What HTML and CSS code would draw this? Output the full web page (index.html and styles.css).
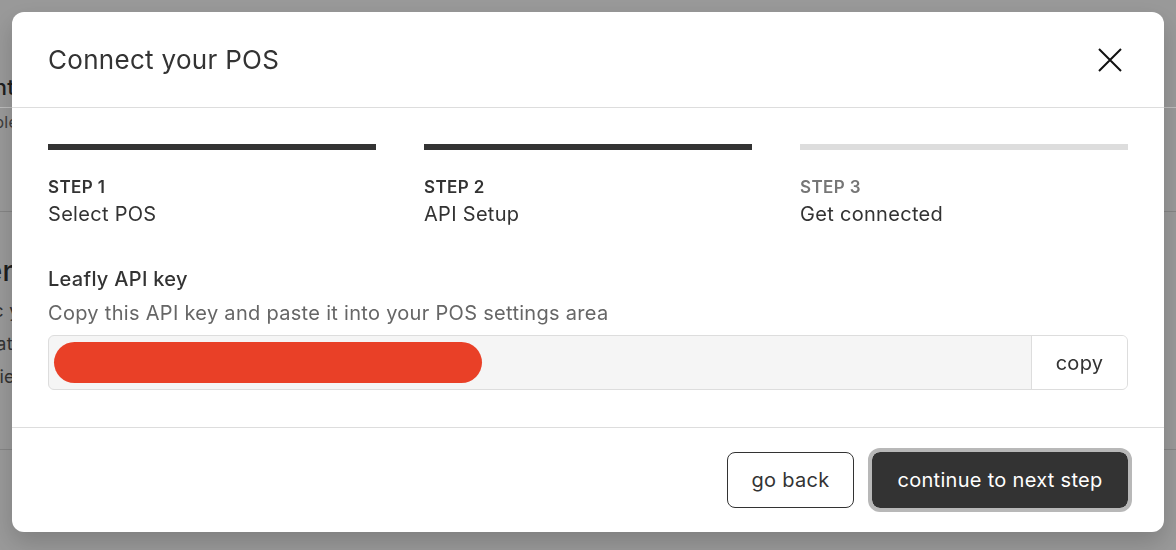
FILE: index.html
```html
<!DOCTYPE html>
<html>
<head>
<title>Connect your POS</title>
<link rel="stylesheet" href="styles.css">
</head>
<body>

<div class="page">
  <div class="pageHead">
    <h2 class="pageTitle">Point of sale connection</h2>
    <p class="pageSub">Sample menu import</p>
  </div>
  <div class="pageSection">
    <h3 class="sectionTitle">Menu integration</h3>
    <p class="sectionText">Sync your inventory</p>
    <p class="sectionText">Update availability</p>
    <p class="sectionText">Preview what shoppers see</p>
  </div>
</div>

<div class="overlay">
  <div class="modal">
    <div class="modalHeader">
      <h1 class="modalTitle">Connect your POS</h1>
      <button class="closeButton" aria-label="close">
        <svg width="24" height="24" viewBox="0 0 24 24">
          <path d="M1 1 L23 23 M23 1 L1 23" stroke="#111" stroke-width="2" fill="none"/>
        </svg>
      </button>
    </div>

    <div class="modalBody">
      <div class="steps">
        <div class="step done">
          <div class="stepBar"></div>
          <div class="stepNum">STEP 1</div>
          <div class="stepName">Select POS</div>
        </div>
        <div class="step done">
          <div class="stepBar"></div>
          <div class="stepNum">STEP 2</div>
          <div class="stepName">API Setup</div>
        </div>
        <div class="step">
          <div class="stepBar"></div>
          <div class="stepNum">STEP 3</div>
          <div class="stepName">Get connected</div>
        </div>
      </div>

      <div class="keyLabel">Leafly API key</div>
      <div class="keyHelp">Copy this API key and paste it into your POS settings area</div>
      <div class="keyField">
        <div class="keyValue"><span class="redacted"></span></div>
        <button class="copyButton">copy</button>
      </div>
    </div>

    <div class="modalFooter">
      <button class="backButton">go back</button>
      <button class="nextButton">continue to next step</button>
    </div>
  </div>
</div>

</body>
</html>
```

FILE: styles.css
```css
html, body {
  margin: 0;
  height: 100%;
  overflow: hidden;
}

body {
  font-family: Inter, "Noto Sans", sans-serif;
  color: #333;
  background: #fff;
  letter-spacing: 0.3px;
}

/* page behind the dialog */
.page {
  margin-left: -40px;
}

.pageHead {
  height: 212px;
  padding-top: 74px;
  box-sizing: border-box;
  border-bottom: 1px solid #ddd;
}

.pageTitle {
  margin: 0;
  font-size: 22px;
  font-weight: 500;
}

.pageSub {
  margin: 12px 0 0 0;
  font-size: 16px;
  color: #666;
}

.pageSection {
  height: 238px;
  border-bottom: 1px solid #ddd;
  padding-top: 42px;
  box-sizing: border-box;
}

.sectionTitle {
  margin: 0 0 6px 0;
  font-size: 28px;
  font-weight: 500;
}

.sectionText {
  margin: 0;
  font-size: 18px;
  line-height: 33px;
  color: #555;
}

.overlay {
  position: fixed;
  inset: 0;
  background: rgba(0, 0, 0, 0.4);
  padding: 12px;
  box-sizing: border-box;
}

.overlay::before {
  content: "";
  position: absolute;
  left: 0;
  right: 0;
  top: 107px;
  border-top: 1px solid rgba(255, 255, 255, 0.35);
}

.modal {
  position: relative;
  background: #fff;
  border-radius: 12px;
  height: 520px;
  box-shadow: 0 10px 24px rgba(0, 0, 0, 0.18);
  display: flex;
  flex-direction: column;
}

.modalHeader {
  height: 96px;
  border-bottom: 1px solid #ddd;
  box-sizing: border-box;
  display: flex;
  align-items: center;
  justify-content: space-between;
  padding: 0 42px 0 36px;
}

.modalTitle {
  margin: 0;
  font-size: 26px;
  font-weight: 400;
  color: #333;
}

.closeButton {
  background: none;
  border: none;
  padding: 0;
  width: 24px;
  height: 24px;
  cursor: pointer;
}

.modalBody {
  padding: 36px 36px 0 36px;
  flex: 1;
  border-bottom: 1px solid #ddd;
}

.steps {
  display: grid;
  grid-template-columns: 1fr 1fr 1fr;
  gap: 48px;
}

.stepBar {
  height: 6px;
  background: #ddd;
  margin-bottom: 27px;
}

.done .stepBar {
  background: #333;
}

.stepNum {
  font-size: 17px;
  font-weight: 600;
  line-height: 20px;
  letter-spacing: 0.4px;
  color: #767676;
}

.done .stepNum {
  color: #333;
}

.stepName {
  font-size: 20px;
  line-height: 28px;
  margin-top: 3px;
  color: #333;
}

.keyLabel {
  margin-top: 37px;
  font-size: 20px;
  font-weight: 500;
  line-height: 28px;
}

.keyHelp {
  margin-top: 6px;
  font-size: 20px;
  line-height: 28px;
  color: #666;
}

.keyField {
  margin-top: 8px;
  display: flex;
  height: 55px;
  border: 1px solid #ddd;
  border-radius: 6px;
  background: #f5f5f5;
  box-sizing: border-box;
  overflow: hidden;
}

.keyValue {
  flex: 1;
  padding: 5px;
  display: flex;
  align-items: center;
}

.redacted {
  display: block;
  width: 428px;
  height: 41px;
  border-radius: 21px;
  background: #e94027;
}

.copyButton {
  width: 96px;
  border: none;
  border-left: 1px solid #ddd;
  background: #fff;
  font-family: inherit;
  letter-spacing: inherit;
  font-size: 20px;
  color: #333;
  cursor: pointer;
}

.modalFooter {
  height: 104px;
  display: flex;
  justify-content: flex-end;
  align-items: center;
  gap: 18px;
  padding: 0 36px;
  box-sizing: border-box;
}

.backButton, .nextButton {
  font-family: inherit;
  letter-spacing: inherit;
  font-size: 20px;
  height: 56px;
  border-radius: 8px;
  cursor: pointer;
}

.backButton {
  width: 127px;
  background: #fff;
  border: 1px solid #333;
  color: #333;
}

.nextButton {
  width: 256px;
  background: #333;
  border: none;
  color: #fff;
  outline: 4px solid #b8b8b8;
  outline-offset: 0;
}
```
